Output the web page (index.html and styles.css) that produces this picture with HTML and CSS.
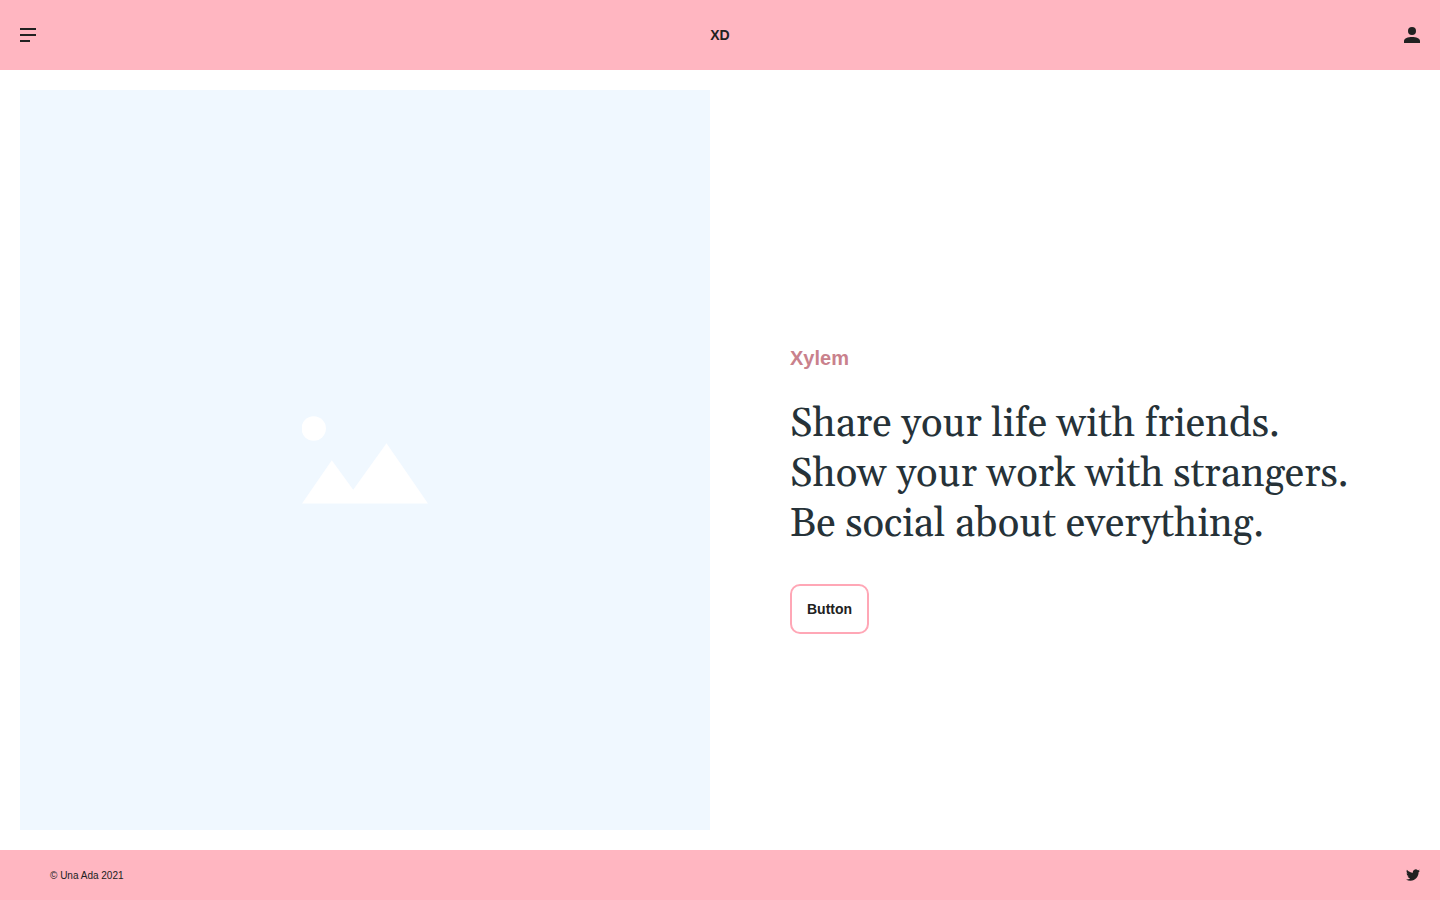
FILE: index.html
```html
<!DOCTYPE html>
<html lang="en">
<head>
<meta charset="utf-8">
<meta name="viewport" content="width=device-width, initial-scale=1">
<title>XD</title>
<link rel="stylesheet" href="styles.css">
</head>
<body>
<header class="header">
  <button class="icon-button" type="button" aria-label="Menu">
    <svg width="16" height="14" viewBox="0 0 16 14" fill="currentColor" aria-hidden="true"><path d="M0 0h16v2H0zM0 6h16v2H0zM0 12h10v2H0z"/></svg>
  </button>
  <a class="brand" href="#">XD</a>
  <button class="icon-button icon-button-end" type="button" aria-label="Account">
    <svg width="16" height="16" viewBox="0 0 16 16" fill="currentColor" aria-hidden="true"><circle cx="8" cy="4" r="4"/><path d="M0 16v-2c0-2.7 4-4 8-4s8 1.300 8 4v2z"/></svg>
  </button>
</header>
<main class="main">
  <div class="picture">
    <svg width="126" height="88" viewBox="0 0 126 88" fill="#fff" aria-hidden="true"><circle cx="11.700" cy="12.500" r="12.200"/><path d="M0 87.600L29.800 44.300 51.200 73.700 84.500 27.200 126 87.600z"/></svg>
  </div>
  <section class="intro">
    <h1 class="name">Xylem</h1>
    <p class="tagline">Share your life with friends.<br>Show your work with strangers.<br>Be social about everything.</p>
    <button class="action" type="button">Button</button>
  </section>
</main>
<footer class="footer">
  <small class="copyright">© Una Ada 2021</small>
  <a class="social" href="#" aria-label="Twitter">
    <svg width="14" height="14" viewBox="0 0 24 24" fill="currentColor" aria-hidden="true"><path d="M23.953 4.570a10 10 0 01-2.825.775 4.958 4.958 0 002.163-2.723c-.951.555-2.005.959-3.127 1.184a4.920 4.920 0 00-8.384 4.482C7.690 8.095 4.067 6.130 1.640 3.162a4.822 4.822 0 00-.666 2.475c0 1.710.870 3.213 2.188 4.096a4.904 4.904 0 01-2.228-.616v.060a4.923 4.923 0 003.946 4.827 4.996 4.996 0 01-2.212.085 4.936 4.936 0 004.604 3.417 9.867 9.867 0 01-6.102 2.105c-.390 0-.779-.023-1.170-.067a13.995 13.995 0 007.557 2.209c9.053 0 13.998-7.496 13.998-13.985 0-.210 0-.420-.015-.630A9.935 9.935 0 0024 4.590z"/></svg>
  </a>
</footer>
</body>
</html>
```

FILE: styles.css
```css
* {
  box-sizing: border-box;
}

body {
  margin: 0;
  min-height: 100vh;
  display: grid;
  grid-template-rows: 70px 1fr 50px;
  background: #fff;
  color: #212121;
  font-family: "Liberation Sans", Arial, sans-serif;
  font-size: 14px;
}

svg {
  display: block;
}

.header {
  display: grid;
  grid-template-columns: 1fr auto 1fr;
  align-items: center;
  padding: 0 20px;
  background: #ffb6c1;
}

.icon-button {
  justify-self: start;
  padding: 0;
  border: 0;
  background: none;
  color: inherit;
}

.icon-button-end {
  justify-self: end;
}

.brand {
  color: inherit;
  font-weight: 700;
  text-decoration: none;
}

.main {
  display: grid;
  grid-template-columns: 1fr 1fr;
  gap: 20px;
  padding: 20px;
}

.picture {
  display: flex;
  align-items: center;
  justify-content: center;
  background: #f0f8ff;
}

.intro {
  display: flex;
  flex-direction: column;
  align-items: flex-start;
  justify-content: center;
  padding: 60px 60px 0;
}

.name {
  margin: 0 0 29px;
  color: #c9818c;
  font-size: 20px;
  line-height: 25px;
}

.tagline {
  margin: 0 0 34px;
  color: #263238;
  font-family: Georgia, Gelasio, "Liberation Serif", serif;
  font-size: 40px;
  line-height: 50px;
}

.action {
  height: 50px;
  padding: 0 15px;
  border: 2px solid #ffa7b6;
  border-radius: 10px;
  background: #fff;
  color: inherit;
  font: inherit;
  font-weight: 700;
}

.footer {
  display: flex;
  align-items: center;
  justify-content: space-between;
  padding: 0 20px 0 50px;
  background: #ffb6c1;
}

.copyright {
  font-size: 10px;
}

.social {
  color: inherit;
}
```
